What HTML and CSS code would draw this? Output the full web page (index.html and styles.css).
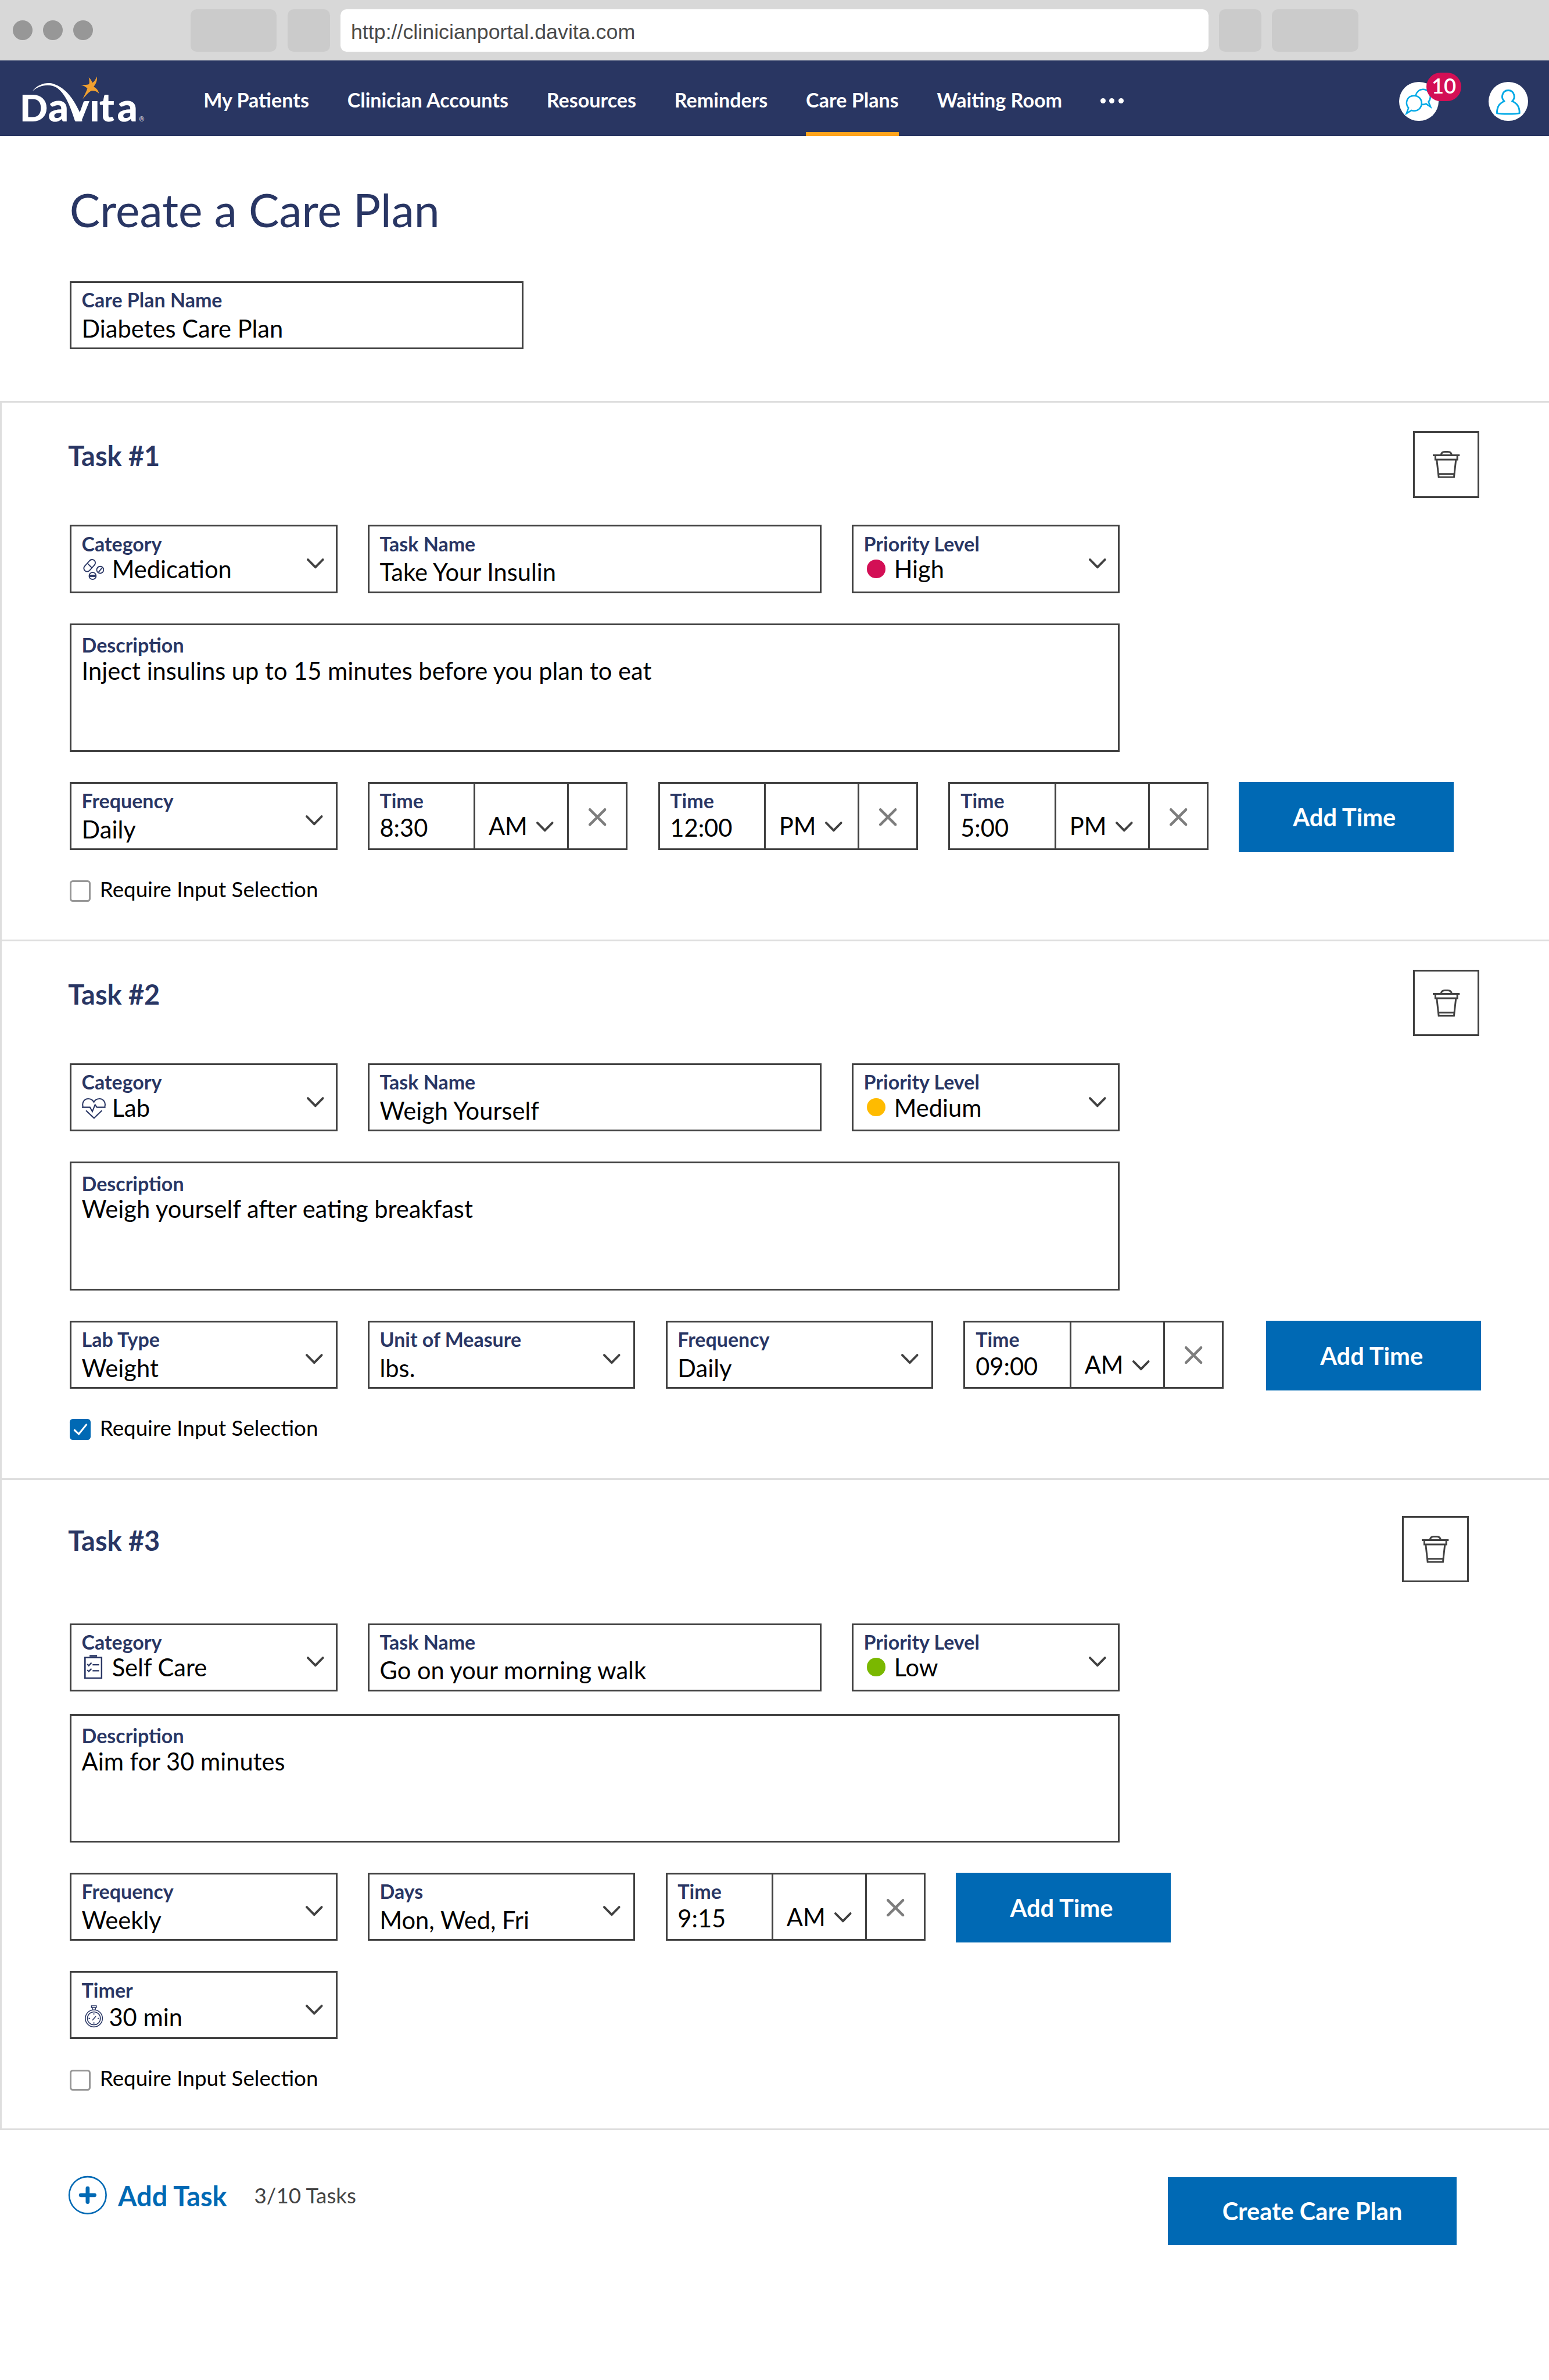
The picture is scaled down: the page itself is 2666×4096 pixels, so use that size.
FILE: index.html
```html
<!DOCTYPE html>
<html lang="en">
<head>
<meta charset="utf-8">
<title>Create a Care Plan</title>
<link rel="stylesheet" href="styles.css">
</head>
<body>
<svg class="sprite" aria-hidden="true">
  <symbol id="chevron" viewBox="0 0 12 7"><path d="M.8 .8 6 6.1 11.2 .8" fill="none" stroke="currentColor" stroke-width="1.55" stroke-linecap="round"/></symbol>
  <symbol id="close" viewBox="0 0 12 12"><path d="M.9 .9 11.1 11.1M11.1 .9 .9 11.1" fill="none" stroke="currentColor" stroke-width="1.8" stroke-linecap="round"/></symbol>
  <symbol id="trash" viewBox="0 0 18 18"><path d="M0 2.9H17.8M5.4 2.9C5.6 1.2 6.6.6 8 .6H9.9C11.3.6 12.3 1.2 12.5 2.9M1.7 3V5.8H16.2V3M2.6 5.8 3.9 17.4H14L15.3 5.8M3.7 15.3H14.2" fill="none" stroke="currentColor" stroke-width="1.15"/></symbol>
  <symbol id="pills" viewBox="0 0 14 14"><g fill="none" stroke="currentColor" stroke-width=".7"><rect x="-.3" y="2.2" width="9.2" height="4.3" rx="2.15" transform="rotate(-48 4.3 4.35)"/><path d="M2.8 2.8 5.8 5.8M10.3 8.6 12.6 5.8M4 10.8H8.6M4 11.6H8.6"/><circle cx="11.3" cy="7.2" r="2.3"/><circle cx="6.3" cy="11.2" r="2.3"/></g></symbol>
  <symbol id="heart" viewBox="0 0 16 14"><path d="M.7 5.6C-.2 2.6 1.8.4 4.2.4 5.9.4 7.2 1.3 7.9 2.6 8.6 1.3 9.9.4 11.6.4 14 .4 16 2.6 15.1 5.6M0 6H5.3L6.9 8.8 8.7 4.3 9.9 6H15.6M2.7 8.2 8 13.2 13.2 8.2" fill="none" stroke="currentColor" stroke-width=".8"/></symbol>
  <symbol id="clipboard" viewBox="0 0 12 16"><g fill="none" stroke="currentColor"><rect x=".5" y="1.8" width="11" height="13.6"/><path d="M3.5 .6H8.5" stroke-width="1.1"/><path d="M2 6.1 3 7.1 4.8 5.2M5.5 6.6H9.8M2 10 3 11 4.8 9.1M5.5 10.5H9.8" stroke-width=".9"/></g></symbol>
  <symbol id="stopwatch" viewBox="0 0 12 15"><g fill="none" stroke="currentColor" stroke-width=".6"><circle cx="6" cy="8.7" r="5.65"/><circle cx="6" cy="8.7" r="4.3"/><path d="M4.4 .4H7.6V1.5H4.4ZM5 1.5V3M7 1.5V3M6 5.2V6.2M6 11.2V12.2M2.5 8.7H3.5M8.5 8.7H9.5M5 10 7.3 7.3"/></g></symbol>
</svg>

<header class="browser">
  <div class="dots"><i></i><i></i><i></i></div>
  <span class="tab tab-wide"></span>
  <span class="tab tab-small"></span>
  <div class="address">http://clinicianportal.davita.com</div>
  <span class="tab tab-small"></span>
  <span class="tab tab-wide"></span>
</header>

<nav class="nav">
  <svg class="logo" viewBox="0 0 810 390" role="img" aria-label="DaVita">
    <text y="317" class="logo-text"><tspan x="28" class="logo-cap">D</tspan><tspan x="196">a</tspan><tspan x="315">v</tspan><tspan x="442">ı</tspan><tspan x="500">t</tspan><tspan x="607">a</tspan></text>
    <path fill="#fff" d="M103 138C135 95 190 82 230 95 300 118 345 180 384 262L400 317H357C330 235 305 160 250 118 205 90 140 102 103 138Z"/>
    <path fill="#f0a030" d="M486 50C491 75 480 95 467 112 484 118 496 135 499 152 484 136 466 134 450 137 432 148 418 168 402 185 412 162 424 142 430 122 420 110 407 106 393 100 410 100 427 102 440 96 444 83 441 70 438 56 449 65 456 76 459 88 473 80 481 66 486 50Z"/>
    <text x="737" y="317" class="logo-mark">®</text>
  </svg>
  <ul class="menu">
    <li>My Patients</li>
    <li>Clinician Accounts</li>
    <li>Resources</li>
    <li>Reminders</li>
    <li class="active">Care Plans</li>
    <li>Waiting Room</li>
    <li class="more"><i></i><i></i><i></i></li>
  </ul>
  <div class="tools">
    <div class="round">
      <svg viewBox="30 96 234 234"><g fill="none" stroke="#00a9e6" stroke-width="9"><path d="M128 178C136 150 155 140 172 140 198 140 216 162 216 186 216 198 212 206 205 214L217 244 190 226C182 231 174 231 166 230"/><path d="M86 251C62 220 78 178 119 178 146 178 164 198 164 222 164 250 144 268 119 268 112 268 107 267 103 265L74 284Z"/></g></svg>
      <span class="badge">10</span>
    </div>
    <div class="round">
      <svg viewBox="561 96 234 234"><path fill="none" stroke="#00a9e6" stroke-width="10" stroke-linejoin="round" d="M655 211C642 200 641 185 643 175 648 152 665 146 678 146 691 146 708 152 713 175 715 185 714 200 701 211 730 222 746 245 745 282 720 288 636 288 611 282 610 245 626 222 655 211Z"/></svg>
    </div>
  </div>
</nav>

<main>
  <section class="intro">
    <h1>Create a Care Plan</h1>
    <div class="field w-name"><div><label>Care Plan Name</label><p>Diabetes Care Plan</p></div></div>
  </section>

  <div class="tasks">
    <section class="task">
      <div class="head"><h2>Task #1</h2><button class="trash"><svg><use href="#trash"/></svg></button></div>
      <div class="row">
        <div class="field iconic w-select"><div><label>Category</label><p><svg class="pills"><use href="#pills"/></svg>Medication</p></div><svg class="chevron"><use href="#chevron"/></svg></div>
        <div class="field w-name"><div><label>Task Name</label><p>Take Your Insulin</p></div></div>
        <div class="field iconic w-select"><div><label>Priority Level</label><p><i class="dot high"></i>High</p></div><svg class="chevron"><use href="#chevron"/></svg></div>
      </div>
      <div class="field area"><div><label>Description</label><p>Inject insulins up to 15 minutes before you plan to eat</p></div></div>
      <div class="row">
        <div class="field w-select inset"><div><label>Frequency</label><p>Daily</p></div><svg class="chevron"><use href="#chevron"/></svg></div>
        <div class="time"><div class="hour"><label>Time</label><p>8:30</p></div><div class="half">AM<svg class="chevron"><use href="#chevron"/></svg></div><div class="remove"><svg><use href="#close"/></svg></div></div>
        <div class="time"><div class="hour"><label>Time</label><p>12:00</p></div><div class="half">PM<svg class="chevron"><use href="#chevron"/></svg></div><div class="remove"><svg><use href="#close"/></svg></div></div>
        <div class="time"><div class="hour"><label>Time</label><p>5:00</p></div><div class="half">PM<svg class="chevron"><use href="#chevron"/></svg></div><div class="remove"><svg><use href="#close"/></svg></div></div>
        <button class="add-time">Add Time</button>
      </div>
      <div class="check"><span class="box"></span><span>Require Input Selection</span></div>
    </section>

    <section class="task">
      <div class="head"><h2>Task #2</h2><button class="trash"><svg><use href="#trash"/></svg></button></div>
      <div class="row">
        <div class="field iconic w-select"><div><label>Category</label><p><svg class="heart"><use href="#heart"/></svg>Lab</p></div><svg class="chevron"><use href="#chevron"/></svg></div>
        <div class="field w-name"><div><label>Task Name</label><p>Weigh Yourself</p></div></div>
        <div class="field iconic w-select"><div><label>Priority Level</label><p><i class="dot medium"></i>Medium</p></div><svg class="chevron"><use href="#chevron"/></svg></div>
      </div>
      <div class="field area"><div><label>Description</label><p>Weigh yourself after eating breakfast</p></div></div>
      <div class="row">
        <div class="field w-select inset"><div><label>Lab Type</label><p>Weight</p></div><svg class="chevron"><use href="#chevron"/></svg></div>
        <div class="field w-select inset"><div><label>Unit of Measure</label><p>lbs.</p></div><svg class="chevron"><use href="#chevron"/></svg></div>
        <div class="field w-select inset"><div><label>Frequency</label><p>Daily</p></div><svg class="chevron"><use href="#chevron"/></svg></div>
        <div class="time"><div class="hour"><label>Time</label><p>09:00</p></div><div class="half">AM<svg class="chevron"><use href="#chevron"/></svg></div><div class="remove"><svg><use href="#close"/></svg></div></div>
        <button class="add-time apart">Add Time</button>
      </div>
      <div class="check"><span class="box checked"><svg viewBox="0 0 14 14"><path d="M3.2 7.4 6 10 11 3.8" fill="none" stroke="#fff" stroke-width="1.2" stroke-linecap="round"/></svg></span><span>Require Input Selection</span></div>
    </section>

    <section class="task tall">
      <div class="head"><h2>Task #3</h2><button class="trash"><svg><use href="#trash"/></svg></button></div>
      <div class="row tight">
        <div class="field iconic w-select"><div><label>Category</label><p><svg class="clipboard"><use href="#clipboard"/></svg>Self Care</p></div><svg class="chevron"><use href="#chevron"/></svg></div>
        <div class="field w-name"><div><label>Task Name</label><p>Go on your morning walk</p></div></div>
        <div class="field iconic w-select"><div><label>Priority Level</label><p><i class="dot low"></i>Low</p></div><svg class="chevron"><use href="#chevron"/></svg></div>
      </div>
      <div class="field area"><div><label>Description</label><p>Aim for 30 minutes</p></div></div>
      <div class="row">
        <div class="field w-select inset"><div><label>Frequency</label><p>Weekly</p></div><svg class="chevron"><use href="#chevron"/></svg></div>
        <div class="field w-select inset"><div><label>Days</label><p>Mon, Wed, Fri</p></div><svg class="chevron"><use href="#chevron"/></svg></div>
        <div class="time"><div class="hour"><label>Time</label><p>9:15</p></div><div class="half">AM<svg class="chevron"><use href="#chevron"/></svg></div><div class="remove"><svg><use href="#close"/></svg></div></div>
        <button class="add-time">Add Time</button>
      </div>
      <div class="row">
        <div class="field w-select inset timer"><div><label>Timer</label><p><svg class="stopwatch"><use href="#stopwatch"/></svg>30 min</p></div><svg class="chevron"><use href="#chevron"/></svg></div>
      </div>
      <div class="check"><span class="box"></span><span>Require Input Selection</span></div>
    </section>
  </div>

  <footer class="footer">
    <svg class="plus" viewBox="0 0 26 26"><circle cx="13" cy="13" r="12.2" fill="none" stroke="#0069b4"/><path d="M13 8.5V17.5M8.5 13H17.5" stroke="#0069b4" stroke-width="2.6" stroke-linecap="round"/></svg>
    <span class="add-task">Add Task</span>
    <span class="count">3/10 Tasks</span>
    <button class="create">Create Care Plan</button>
  </footer>
</main>
</body>
</html>
```

FILE: styles.css
```css
/* 10 design pixels = 1rem on a 1024-wide canvas */
html { font-size: 26.0352px; }
* { box-sizing: border-box; margin: 0; padding: 0; }
body {
  width: 102.4rem;
  height: 4096px;
  overflow: hidden;
  background: #fff;
  color: #000;
  font: 1.6rem/2rem Lato, "Liberation Sans", sans-serif;
}
svg { display: block; overflow: visible; flex: none; }
.sprite { position: absolute; width: 0; height: 0; }
button { border: 0; background: none; font: inherit; color: inherit; flex: none; }

/* browser frame */
.browser { display: flex; align-items: center; height: 4rem; padding-left: .85rem; background: #d8d8d8; }
.dots { display: flex; gap: .7rem; width: 11.75rem; }
.dots i { width: 1.3rem; height: 1.3rem; border-radius: 50%; background: #979797; }
.tab { height: 2.8rem; margin-right: .7rem; border-radius: .4rem; background: #cbcbcb; }
.tab-wide { width: 5.7rem; }
.tab-small { width: 2.8rem; }
.address {
  width: 57.4rem; height: 2.8rem; margin-right: .7rem; padding-left: .7rem;
  border-radius: .4rem; background: #fff; color: #4a4a4a;
  font: 1.375rem/3.04rem "Liberation Sans", Arial, sans-serif;
}

/* navigation */
.nav { display: flex; height: 5rem; background: #293662; color: #fff; }
.logo { width: 9rem; height: 4.3333rem; margin: .5rem 0 0 1rem; }
.logo-text { font-family: Lato, sans-serif; font-weight: 900; font-size: 240px; fill: #fff; }
.logo-cap { font-size: 220px; }
.logo-mark { font-family: Lato, sans-serif; font-size: 38px; fill: #fff; }
.menu { display: flex; gap: 2.525rem; margin-left: 3.45rem; list-style: none; font-size: 1.31rem; font-weight: 700; line-height: 5.22rem; white-space: nowrap; }
.menu li { height: 5rem; }
.menu .active { border-bottom: .3rem solid #ffa41c; }
.menu .more { display: flex; align-items: center; gap: .26rem; padding-top: .34rem; }
.more i { width: .34rem; height: .34rem; border-radius: 50%; background: #fff; }
.tools { display: flex; gap: 3.3rem; margin: 1.4rem 1.4rem 0 auto; }
.round { position: relative; width: 2.6rem; height: 2.6rem; border-radius: 50%; background: #fff; }
.round svg { width: 100%; height: 100%; }
.badge {
  position: absolute; left: 1.8rem; top: -.6rem; width: 2.3rem; height: 1.9rem;
  border-radius: .95rem; background: #d30f55; text-align: center;
  font-size: 1.4rem; font-weight: 600; line-height: 1.72rem;
}

/* intro */
.intro { height: 17.5rem; padding: 3.2rem 0 0 4.6rem; }
h1 { height: 6.4rem; color: #293664; font-size: 3.02rem; font-weight: 400; line-height: 3.32rem; }

/* fields */
.field { display: flex; justify-content: space-between; flex: none; height: 4.5rem; padding: .315rem 0 0 .685rem; border: 3px solid #414141; white-space: nowrap; }
label { display: block; color: #293664; font-size: 1.305rem; font-weight: 700; line-height: 1.6rem; }
.field p { display: flex; margin-top: .08rem; }
.w-name { width: 30rem; }
.w-select { width: 17.7rem; }
.iconic p, .area p { margin-top: -.12rem; }
.timer p { margin-top: -.02rem; }
.area { width: 69.4rem; height: 8.5rem; padding-top: .515rem; margin-bottom: 2rem; }
.chevron { width: 1.14rem; height: .67rem; color: #414141; }
.field > .chevron { margin: 1.77rem .77rem 0 0; }
.inset > .chevron { margin-right: .86rem; }
.pills { width: 1.4rem; height: 1.4rem; margin: .36rem .5rem 0 .1rem; color: #293664; }
.heart { width: 1.6rem; height: 1.4rem; margin: .38rem .4rem 0 0; color: #293664; }
.clipboard { width: 1.2rem; height: 1.6rem; margin: .19rem .62rem 0 .18rem; color: #293664; }
.stopwatch { width: 1.2rem; height: 1.5rem; margin: .25rem .4rem 0 .2rem; color: #293664; }
.dot { width: 1.2rem; height: 1.2rem; margin: .39rem .58rem 0 .22rem; border-radius: 50%; }
.high { background: #d30f55; }
.medium { background: #ffbb00; }
.low { background: #7ab800; }

/* time picker */
.time { display: flex; flex: none; width: 17.2rem; height: 4.5rem; border: 3px solid #414141; }
.hour { width: 6.885rem; padding: .315rem 0 0 .685rem; }
.hour p { margin-top: -.02rem; }
.half { display: flex; width: 6.3rem; padding: 1.785rem 0 0 .885rem; border: solid #414141; border-width: 0 3px; }
.half .chevron { margin: .72rem 0 0 .6rem; }
.remove { flex: 1; }
.remove svg { width: 1.17rem; height: 1.17rem; margin: 1.6rem auto 0; color: #7d7d7d; }
.add-time { width: 14.2rem; height: 4.6rem; padding-right: .25rem; background: #0069b4; color: #fff; font-weight: 700; line-height: 4.64rem; }
.apart { margin-left: .8rem; }

/* tasks */
.tasks { border: solid #dedede; border-width: 0 0 3px 3px; }
.task { height: 35.6rem; padding: 1.885rem 4.6rem 0 4.485rem; border-top: 3px solid #dedede; }
.tall { height: 43rem; padding-top: 2.385rem; padding-right: 5.3rem; }
.head { display: flex; justify-content: space-between; height: 6.2rem; }
.tall .head { height: 7.1rem; }
h2 { margin: .54rem 0 0 -.1rem; color: #293664; font-size: 1.8rem; font-weight: 700; line-height: 2.2rem; }
.trash { width: 4.4rem; height: 4.4rem; border: 3px solid #414141; color: #414141; }
.trash svg { width: 1.8rem; height: 1.8rem; margin: 0 auto; }
.row { display: flex; gap: 2rem; height: 4.5rem; margin-bottom: 2rem; }
.tight { margin-bottom: 1.5rem; }
.check { display: flex; gap: .6rem; font-size: 1.412rem; line-height: 1.4rem; }
.check span:last-child { margin-top: -.13rem; }
.box { width: 1.4rem; height: 1.4rem; border: 3px solid #979797; border-radius: .2rem; }
.box.checked { border: 0; background: #0069b4; }

/* footer */
.footer { display: flex; padding-left: 4.5rem; }
.plus { width: 2.6rem; height: 2.6rem; margin-top: 2.98rem; }
.add-task { margin: 3.26rem 0 0 .7rem; color: #0069b4; font-size: 1.8rem; font-weight: 700; line-height: 2.2rem; }
.count { margin: 3.28rem 0 0 1.8rem; color: #444; font-size: 1.415rem; }
.create { width: 19.1rem; height: 4.5rem; margin: 3.1rem 6.1rem 0 auto; background: #0069b4; color: #fff; font-weight: 700; line-height: 4.32rem; }
```
